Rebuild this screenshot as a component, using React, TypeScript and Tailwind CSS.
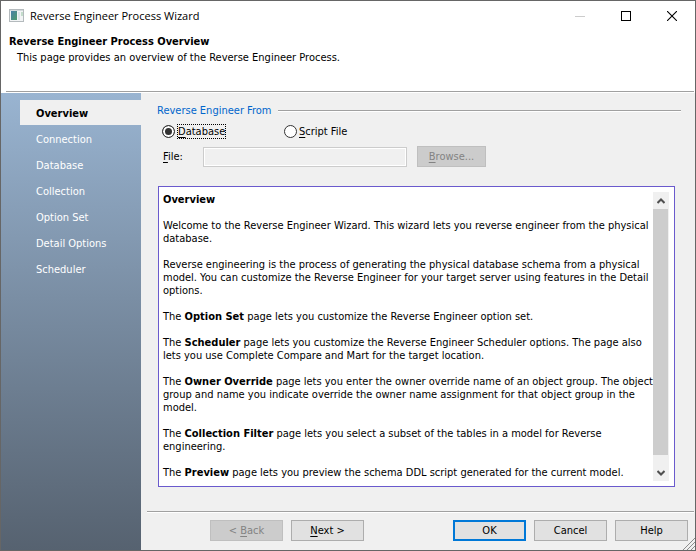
import { useState, type ReactNode } from "react";

const steps = ["Overview", "Connection", "Database", "Collection", "Option Set", "Detail Options", "Scheduler"];

function Rule({ className = "" }: { className?: string }) {
  return <div className={`h-[2px] border-t border-[#a0a0a0] bg-white ${className}`} />;
}

function Key({ children }: { children: ReactNode }) {
  return <span className="underline decoration-1 underline-offset-2">{children}</span>;
}

function PushButton({
  children,
  disabled = false,
  primary = false,
}: {
  children: ReactNode;
  disabled?: boolean;
  primary?: boolean;
}) {
  const look = disabled
    ? "border border-[#bfbfbf] bg-[#cccccc] text-[#838383]"
    : primary
      ? "border-2 border-[#0078d7] bg-[#e1e1e1]"
      : "border border-[#adadad] bg-[#e1e1e1]";
  return (
    <button
      type="button"
      disabled={disabled}
      className={`flex h-[21px] w-[73px] items-center justify-center whitespace-pre leading-[13px] ${look}`}
    >
      {children}
    </button>
  );
}

function TitleBar() {
  return (
    <div className="flex h-[29px] shrink-0 items-center pl-2">
      <svg width="15" height="13" viewBox="0 0 15 13" className="mr-[6px]" aria-hidden="true">
        <defs>
          <linearGradient id="pane" x1="0" y1="0" x2="1" y2="1">
            <stop offset="0" stopColor="#4a7fa8" />
            <stop offset="1" stopColor="#4f9a6b" />
          </linearGradient>
        </defs>
        <rect x="0.5" y="0.5" width="14" height="12" fill="#f2f4f5" stroke="#b4babd" />
        <rect x="1" y="1" width="13" height="1" fill="#d3d9dc" />
        <rect x="2" y="2" width="6" height="9" fill="url(#pane)" />
        <rect x="9" y="3" width="2" height="8" fill="#dfe4e8" />
        <rect x="12" y="3" width="2" height="4" fill="#c3dccb" />
      </svg>
      <h1 className="flex-1 font-['Open_Sans','Noto_Sans',sans-serif] text-[11px] leading-[16px]">
        Reverse Engineer Process Wizard
      </h1>
      <button type="button" disabled aria-label="Minimize" className="flex h-full w-[46px] items-center justify-center">
        <svg width="10" height="10" viewBox="0 0 10 10" aria-hidden="true">
          <path d="M0 5.5H10" stroke="#cccccc" />
        </svg>
      </button>
      <button type="button" aria-label="Maximize" className="flex h-full w-[46px] items-center justify-center">
        <svg width="10" height="10" viewBox="0 0 10 10" aria-hidden="true">
          <rect x="0.5" y="0.5" width="9" height="9" fill="none" stroke="#000" />
        </svg>
      </button>
      <button type="button" aria-label="Close" className="flex h-full w-[46px] items-center justify-center">
        <svg width="10" height="10" viewBox="0 0 10 10" aria-hidden="true">
          <path d="M0 0L10 10M10 0L0 10" stroke="#000" strokeWidth="1.1" />
        </svg>
      </button>
    </div>
  );
}

function Sidebar({ active, onSelect }: { active: string; onSelect: (s: string) => void }) {
  return (
    <nav className="w-[140px] shrink-0 bg-linear-to-b from-[#99b4d1] to-[#566270] pt-[7px] pl-[19px]">
      <ul className="flex flex-col gap-px">
        {steps.map((s) => (
          <li key={s}>
            <button
              type="button"
              onClick={() => onSelect(s)}
              className={`flex h-[25px] w-full items-center pt-[2px] pl-4 text-left ${
                s === active ? "bg-[#f0f0f0] font-bold text-black" : "text-white"
              }`}
            >
              {s}
            </button>
          </li>
        ))}
      </ul>
    </nav>
  );
}

const radio =
  "size-[13px] shrink-0 appearance-none rounded-full border border-[#333] bg-white checked:bg-[#333] checked:shadow-[inset_0_0_0_2px_#fff]";

function SourceOptions() {
  const [source, setSource] = useState("database");
  return (
    <div className="pl-[5px]">
      <div role="radiogroup" aria-labelledby="source-heading" className="flex h-[15px] items-center">
        <label className="flex w-[122px] items-center gap-[2px]">
          <input type="radio" name="source" className={radio} checked={source === "database"} onChange={() => setSource("database")} />
          <span className="border border-dotted border-black leading-[13px]">
            <Key>D</Key>atabase
          </span>
        </label>
        <label className="flex items-center gap-[2px]">
          <input type="radio" name="source" className={radio} checked={source === "script"} onChange={() => setSource("script")} />
          <span>
            <Key>S</Key>cript File
          </span>
        </label>
      </div>
      <div className="mt-[7px] flex items-center">
        <label htmlFor="file" className="w-[41px] pl-px">
          <Key>F</Key>ile:
        </label>
        <input id="file" type="text" disabled className="mr-[10px] h-[20px] w-[204px] border border-[#cccccc] bg-[#f0f0f0] px-1 shadow-[inset_0_0_0_1px_#fff]" />
        <button type="button" disabled className="h-[21px] w-[69px] border border-[#bfbfbf] bg-[#cccccc] leading-[13px] text-[#838383]">
          <Key>B</Key>rowse...
        </button>
      </div>
    </div>
  );
}

function ScrollArrow({ up = false }: { up?: boolean }) {
  return (
    <button type="button" aria-label={up ? "Scroll up" : "Scroll down"} className="flex h-[17px] items-center justify-center">
      <svg width="8" height="6" viewBox="0 0 8 6" aria-hidden="true">
        <path d={up ? "M0.5 5L4 1.5L7.5 5" : "M0.5 1L4 4.5L7.5 1"} fill="none" stroke="#505050" strokeWidth="2" />
      </svg>
    </button>
  );
}

function OverviewPanel() {
  return (
    <section className="flex min-w-0 flex-1 border border-[#6a5acd] bg-white py-[5px] pr-[5px] pl-1">
      <div className="flex min-w-0 flex-1 flex-col gap-[13px] pt-px whitespace-nowrap">
        <h3 className="font-bold">Overview</h3>
        <p>
          Welcome to the Reverse Engineer Wizard. This wizard lets you reverse engineer from the physical
          <br />
          database.
        </p>
        <p>
          Reverse engineering is the process of generating the physical database schema from a physical
          <br />
          model. You can customize the Reverse Engineer for your target server using features in the Detail
          <br />
          options.
        </p>
        <p>
          The <b>Option Set</b> page lets you customize the Reverse Engineer option set.
        </p>
        <p>
          The <b>Scheduler</b> page lets you customize the Reverse Engineer Scheduler options. The page also
          <br />
          lets you use Complete Compare and Mart for the target location.
        </p>
        <p>
          The <b>Owner Override</b> page lets you enter the owner override name of an object group. The object
          <br />
          group and name you indicate override the owner name assignment for that object group in the
          <br />
          model.
        </p>
        <p>
          The <b>Collection Filter</b> page lets you select a subset of the tables in a model for Reverse
          <br />
          engineering.
        </p>
        <p>
          The <b>Preview</b> page lets you preview the schema DDL script generated for the current model.
        </p>
      </div>
      <div className="flex w-[16px] shrink-0 flex-col bg-[#f0f0f0]">
        <ScrollArrow up />
        <div className="mr-px mb-[9px] flex-1 bg-[#cdcdcd]" />
        <ScrollArrow />
      </div>
    </section>
  );
}

export default function App() {
  const [step, setStep] = useState("Overview");
  return (
    <div className="flex min-h-screen flex-col border border-[#666666] bg-white font-['DejaVu_Sans_Condensed','DejaVu_Sans',sans-serif] text-[11px] leading-[13px] text-black">
      <TitleBar />
      <header className="h-[61px] shrink-0 pt-[5px] pl-2">
        <h2 className="font-bold">Reverse Engineer Process Overview</h2>
        <p className="mt-[3px] pl-2">This page provides an overview of the Reverse Engineer Process.</p>
      </header>
      <Rule className="mr-px ml-[5px]" />
      <div className="flex flex-1">
        <Sidebar active={step} onSelect={setStep} />
        <main className="flex min-w-0 flex-1 flex-col bg-[#f0f0f0]">
          <div className="flex flex-1 flex-col pt-[11px] pr-[20px] pl-[16px]">
            <div className="mr-[-6px] flex items-center">
              <h2 id="source-heading" className="text-[#0066cc]">
                Reverse Engineer From
              </h2>
              <Rule className="ml-[6px] flex-1" />
            </div>
            <div className="mt-[7px] mb-[19px]">
              <SourceOptions />
            </div>
            <div className="ml-px flex flex-1">
              <OverviewPanel />
            </div>
          </div>
          <Rule className="mt-[24px] mr-px ml-[6px]" />
          <footer className="relative flex justify-end gap-2 pt-[7px] pr-[7px] pb-[9px]">
            <PushButton disabled>
              {"< "}
              <Key>B</Key>ack
            </PushButton>
            <PushButton>
              <Key>N</Key>
              {"ext >"}
            </PushButton>
            <div className="w-[73px]" />
            <PushButton primary>OK</PushButton>
            <PushButton>Cancel</PushButton>
            <PushButton>Help</PushButton>
            <svg width="12" height="12" viewBox="0 0 12 12" className="absolute right-0 bottom-0" aria-hidden="true">
              <path d="M0 12L12 0M4 12L12 4M8 12L12 8" stroke="#8c8c8c" />
            </svg>
          </footer>
        </main>
      </div>
    </div>
  );
}
